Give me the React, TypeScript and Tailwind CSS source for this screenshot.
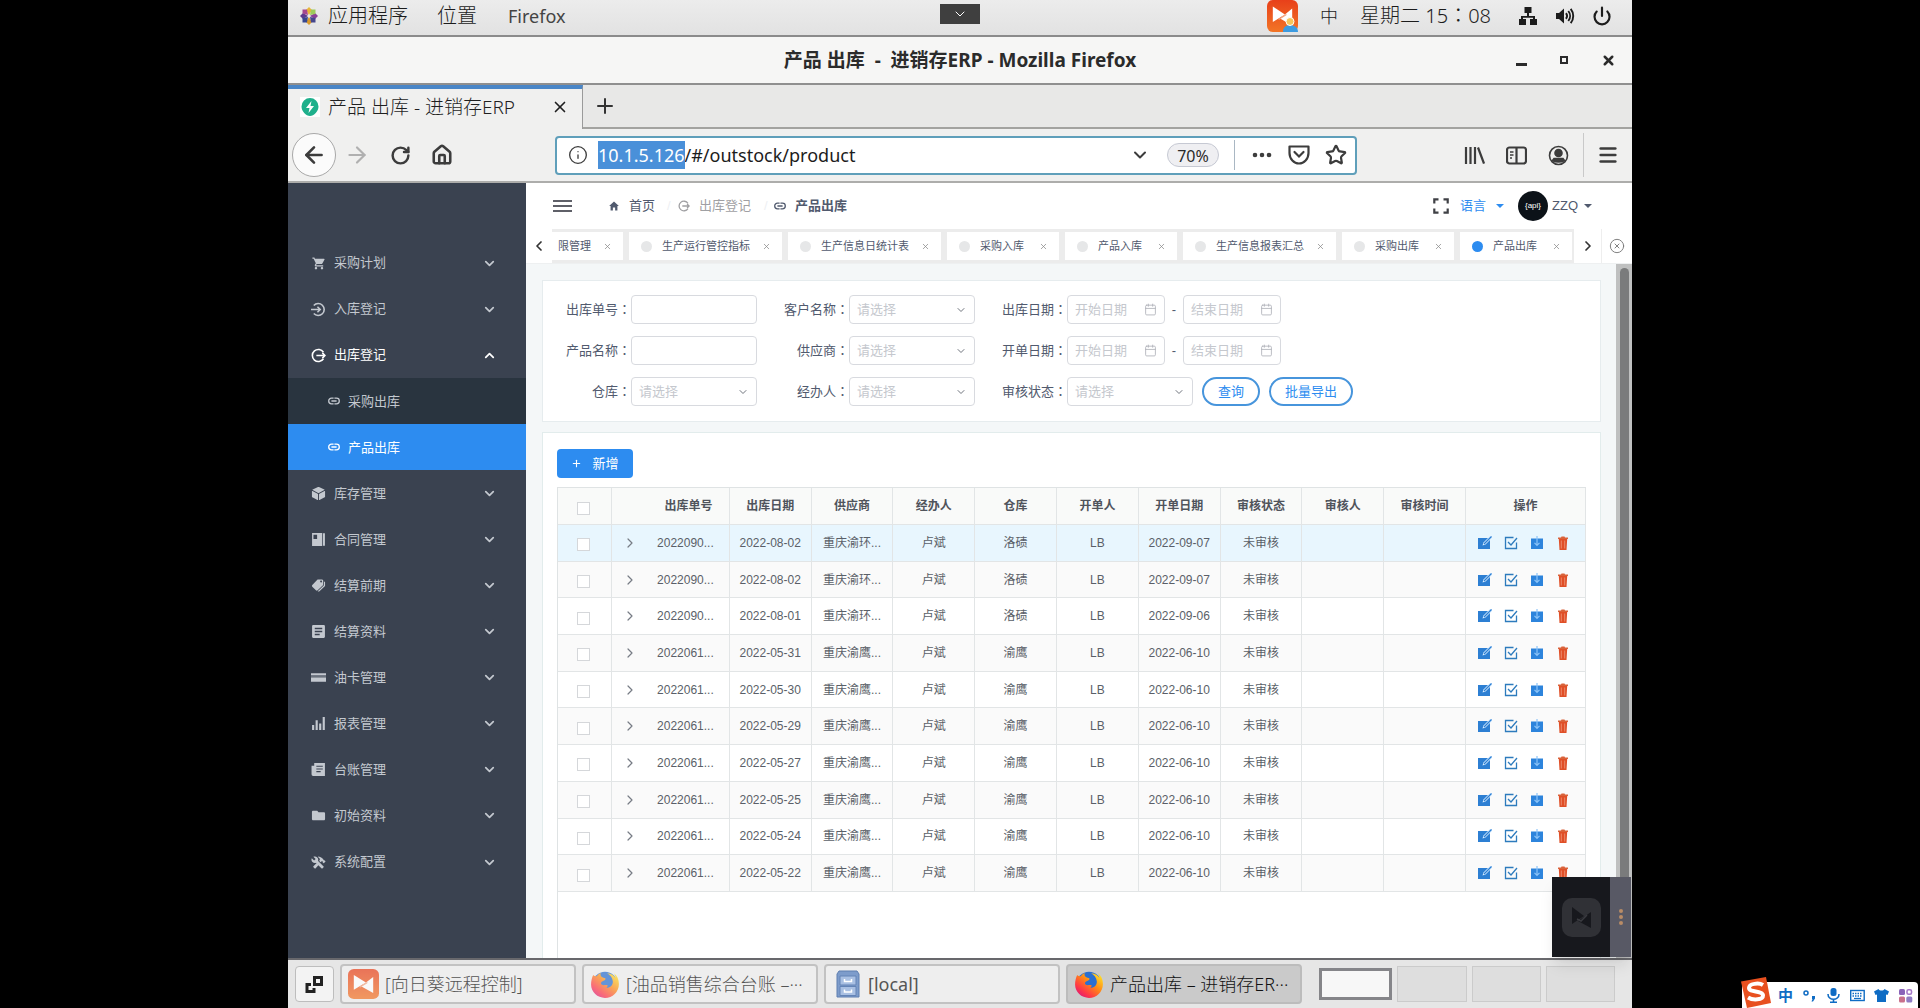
import {
  ArrowLeft,
  ArrowRight,
  Calendar,
  ChevronDown,
  ChevronLeft,
  ChevronRight,
  ChevronUp,
  CircleX,
  Ellipsis,
  House,
  Info,
  Menu,
  Plus,
  Power,
  RotateCw,
  Star,
  X,
} from "lucide-react";
import { useEffect, useRef, useState } from "react";
import type { ReactNode } from "react";
import { IoMdCart, IoMdConstruct, IoMdCube, IoMdFolder, IoMdHome, IoMdPricetags } from "react-icons/io";

type IconProps = { className?: string };

type OutstockRow = {
  orderNo: string;
  outDate: string;
  supplier: string;
  warehouse: string;
  billDate: string;
};

const rows: OutstockRow[] = [
  { orderNo: "2022090...", outDate: "2022-08-02", supplier: "重庆渝环...", warehouse: "洛碛", billDate: "2022-09-07" },
  { orderNo: "2022090...", outDate: "2022-08-02", supplier: "重庆渝环...", warehouse: "洛碛", billDate: "2022-09-07" },
  { orderNo: "2022090...", outDate: "2022-08-01", supplier: "重庆渝环...", warehouse: "洛碛", billDate: "2022-09-06" },
  { orderNo: "2022061...", outDate: "2022-05-31", supplier: "重庆渝鹰...", warehouse: "渝鹰", billDate: "2022-06-10" },
  { orderNo: "2022061...", outDate: "2022-05-30", supplier: "重庆渝鹰...", warehouse: "渝鹰", billDate: "2022-06-10" },
  { orderNo: "2022061...", outDate: "2022-05-29", supplier: "重庆渝鹰...", warehouse: "渝鹰", billDate: "2022-06-10" },
  { orderNo: "2022061...", outDate: "2022-05-27", supplier: "重庆渝鹰...", warehouse: "渝鹰", billDate: "2022-06-10" },
  { orderNo: "2022061...", outDate: "2022-05-25", supplier: "重庆渝鹰...", warehouse: "渝鹰", billDate: "2022-06-10" },
  { orderNo: "2022061...", outDate: "2022-05-24", supplier: "重庆渝鹰...", warehouse: "渝鹰", billDate: "2022-06-10" },
  { orderNo: "2022061...", outDate: "2022-05-22", supplier: "重庆渝鹰...", warehouse: "渝鹰", billDate: "2022-06-10" },
];

const pageTabs = [
  "限管理",
  "生产运行管控指标",
  "生产信息日统计表",
  "采购入库",
  "产品入库",
  "生产信息报表汇总",
  "采购出库",
  "产品出库",
];

function EnterIcon({ className }: IconProps) {
  return (
    <svg aria-hidden="true" className={className} fill="none" stroke="currentColor" strokeWidth="1.5" viewBox="0 0 14 14">
      <path d="M2.6 3.2a5.6 5.6 0 1 1 0 7.6" />
      <path d="M0 7h8.4M6 4.4 8.6 7 6 9.6" />
    </svg>
  );
}

function ExitIcon({ className }: IconProps) {
  return (
    <svg aria-hidden="true" className={className} fill="none" stroke="currentColor" strokeWidth="1.5" viewBox="0 0 14 14">
      <path d="M11.6 4A5.6 5.6 0 1 0 11.6 10" />
      <path d="M5 7h8M10.6 4.6 13 7l-2.4 2.4" />
    </svg>
  );
}

function LinkIcon({ className }: IconProps) {
  return (
    <svg aria-hidden="true" className={className} fill="none" stroke="currentColor" strokeWidth="1.3" viewBox="0 0 12 12">
      <path d="M5.6 3.2H3.500a2.800 2.800 0 0 0 0 5.600h2.100M6.400 3.200h2.100a2.800 2.800 0 0 1 0 5.600H6.400M3.400 6h5.200" />
    </svg>
  );
}

function ContractIcon({ className }: IconProps) {
  return (
    <svg aria-hidden="true" className={className} fill="currentColor" viewBox="0 0 14 14">
      <path d="M1 1h9.500v12H1zM2.300 2.500v4h3.400v-4z" fillRule="evenodd" />
      <path d="M11.200 1.200H13v11.600h-1.800z" />
    </svg>
  );
}

function DocIcon({ className }: IconProps) {
  return (
    <svg aria-hidden="true" className={className} fill="currentColor" viewBox="0 0 14 14">
      <path d="M2 1h10a1 1 0 0 1 1 1v10a1 1 0 0 1-1 1H2a1 1 0 0 1-1-1V2a1 1 0 0 1 1-1zm1.500 2.500v1.300h7V3.500zm0 2.800v1.300h7V6.300zm0 2.800v1.300h4.600V9.100z" fillRule="evenodd" />
    </svg>
  );
}

function CardIcon({ className }: IconProps) {
  return (
    <svg aria-hidden="true" className={className} fill="currentColor" viewBox="0 0 14 14">
      <path d="M0 3h14v2H0zM0 7h14v4H0z" />
      <path d="M0 5h14v2H0z" opacity="0.35" />
    </svg>
  );
}

function LedgerIcon({ className }: IconProps) {
  return (
    <svg aria-hidden="true" className={className} fill="currentColor" viewBox="0 0 14 14">
      <path d="M3 1h10v12H2a1.500 1.500 0 0 1-1.500-1.500V3.500H3zm2 2.500v1h6v-1zm0 2.500v1h6V6zm0 2.500v1h4v-1z" fillRule="evenodd" />
    </svg>
  );
}

function BarsIcon({ className }: IconProps) {
  return (
    <svg aria-hidden="true" className={className} fill="currentColor" viewBox="0 0 14 14">
      <path d="M1 8.500h2V13H1zM4.300 4h2v9h-2zM7.600 7h2v6h-2zM10.900 1h2v12h-2z" />
    </svg>
  );
}

function NetworkIcon({ className }: IconProps) {
  return (
    <svg aria-hidden="true" className={className} fill="currentColor" viewBox="0 0 20 20">
      <path d="M6.500 1h7v6h-2.500v3h6v3H19v6h-7v-6h3v-1.300H5V13h3v6H1v-6h2v-3h6V7H6.500z" />
    </svg>
  );
}

function VolumeIcon({ className }: IconProps) {
  return (
    <svg aria-hidden="true" className={className} fill="none" stroke="currentColor" strokeWidth="1.900" viewBox="0 0 20 20">
      <path d="M1 7h3l5-4.500v15L4 13H1z" fill="currentColor" stroke="none" />
      <path d="M11 7.200a4.500 4.500 0 0 1 0 5.600M13.300 5a8 8 0 0 1 0 10M15.700 2.800a11.500 11.500 0 0 1 0 14.400" />
    </svg>
  );
}

function GnomeIcon({ className }: IconProps) {
  return (
    <svg aria-hidden="true" className={className} viewBox="0 0 18 18">
      <path d="M9 0l3 3-3 5-3-5z" fill="#e8b53a" />
      <path d="M18 9l-3 3-5-3 5-3z" fill="#8a3f97" />
      <path d="M9 18l-3-3 3-5 3 5z" fill="#d99a2b" />
      <path d="M0 9l3-3 5 3-5 3z" fill="#5b3a8e" />
      <path d="M2.500 2.500H7L8 8 2.500 6.500z" fill="#a5478f" />
      <path d="M11 2.500h4.500V7L10 8z" fill="#9ccb5a" />
      <path d="M2.500 15.500V11L8 10l-1 5.500z" fill="#37478f" />
      <path d="M15.500 15.500H11L10 10l5.500 1z" fill="#45468c" />
    </svg>
  );
}

function SunloginIcon({ className }: IconProps) {
  return (
    <svg aria-hidden="true" className={className} preserveAspectRatio="none" viewBox="0 0 32 32">
      <defs>
        <linearGradient id="sunlogin" x1="0" x2="0" y1="0" y2="1">
          <stop offset="0" stopColor="#e8401a" />
          <stop offset="1" stopColor="#f27526" />
        </linearGradient>
      </defs>
      <rect fill="url(#sunlogin)" height="32" rx="6" width="32" />
      <path d="M6 6.500l12.500 8L6 22z" fill="#fff" />
      <path d="M26 8.500v17L13.500 18.500z" fill="#fff" />
      <path d="M12 19.500l8-5" stroke="#f2a27c" strokeWidth="1.200" />
    </svg>
  );
}

function FirefoxIcon({ className }: IconProps) {
  return (
    <svg aria-hidden="true" className={className} viewBox="0 0 28 28">
      <defs>
        <linearGradient id="fox" x1="0.900" x2="0.100" y1="0.050" y2="0.950">
          <stop offset="0" stopColor="#ffe226" />
          <stop offset="0.400" stopColor="#ff8a16" />
          <stop offset="0.750" stopColor="#ff3647" />
          <stop offset="1" stopColor="#d6157f" />
        </linearGradient>
      </defs>
      <circle cx="14" cy="14" fill="#2a6fd0" r="11.500" />
      <path d="M3 5.500c1 1 2 1.300 3.300 1.300C7.500 5 9 4.200 10 3.800 9.500 5.500 10 7 11.500 7.800c1.500.7 3 .6 3 1.500s-2 1.700-3.500 2.500c-1.300.8-.8 2.800.8 3.200 1.500.4 2.700-.4 4 0s.8 1.500-.5 2.200c3 1 6.300-1.700 6-5.700-.3-3.500-2.500-6-5.300-7.500 4 0 6.500 2 7.800 4.500 0-1.500-.6-3.300-1.500-4.500 3 2 4.700 6 4.700 10 0 7.500-6 13-13 13S1 21.500 1 14.500c0-3.500.8-6.500 2-9z" fill="url(#fox)" />
    </svg>
  );
}

function CabinetIcon({ className }: IconProps) {
  return (
    <svg aria-hidden="true" className={className} viewBox="0 0 24 28">
      <path d="M3 1h18l2 3v23H1V4z" fill="#7d9ccb" stroke="#5f7fb0" />
      <path d="M4 6h16v9H4zM4 16.500h16v9H4z" fill="#a9c0e3" stroke="#6484b6" />
      <path d="M8.500 9v2.500h7V9M8.500 19.500V22h7v-2.500" fill="none" stroke="#fff" strokeWidth="1.500" />
    </svg>
  );
}

function EditIcon() {
  return (
    <svg aria-hidden="true" className="size-[14px]" viewBox="0 0 14 14">
      <path d="M0 2h12v11H0z" fill="#2d7fd3" />
      <path d="M4.500 9.500l1-3L12 0h2v2L7.500 8.500z" fill="#d6ebff" />
      <path d="M6 8l7.500-7.500" stroke="#2d7fd3" strokeWidth="1.200" />
    </svg>
  );
}

function AuditIcon() {
  return (
    <svg aria-hidden="true" className="size-[14px]" fill="none" stroke="#2d7bbd" strokeWidth="1.300" viewBox="0 0 14 14">
      <path d="M9.500 1.500H1.500v11h11V6.500" />
      <path d="M4 6l3 3 6-7" />
    </svg>
  );
}

function DownloadIcon() {
  return (
    <svg aria-hidden="true" className="size-[14px]" viewBox="0 0 14 14">
      <path d="M1 2.500h12V13H1z" fill="#2d84dc" />
      <path d="M7 0v9M4.500 6.800L7 9.300l2.500-2.500" fill="none" stroke="#8cc4f8" strokeWidth="1.200" />
    </svg>
  );
}

function TrashIcon() {
  return (
    <svg aria-hidden="true" className="size-[14px]" viewBox="0 0 14 14">
      <path d="M2 1.500h3l.5-1h3l.5 1h3V3H2z" fill="#d9623a" />
      <path d="M2.800 3h8.400L10.500 14h-7z" fill="#e04f27" />
      <path d="M5.300 4.500v8M8.700 4.500v8" stroke="#f2b29b" strokeWidth="0.600" />
    </svg>
  );
}

const upperMenu = [
  { label: "采购计划", Icon: IoMdCart },
  { label: "入库登记", Icon: EnterIcon },
];

const lowerMenu = [
  { label: "库存管理", Icon: IoMdCube },
  { label: "合同管理", Icon: ContractIcon },
  { label: "结算前期", Icon: IoMdPricetags },
  { label: "结算资料", Icon: DocIcon },
  { label: "油卡管理", Icon: CardIcon },
  { label: "报表管理", Icon: BarsIcon },
  { label: "台账管理", Icon: LedgerIcon },
  { label: "初始资料", Icon: IoMdFolder },
  { label: "系统配置", Icon: IoMdConstruct },
];

function DesktopPanel() {
  return (
    <header className="relative flex h-[37px] items-center border-b-2 border-[#8b8b8b] bg-linear-to-b from-[#ececec] to-[#e2e2e2] pr-5 pb-1 pl-3 text-xl text-[#1c1c1c]">
      <GnomeIcon className="size-[18px]" />
      <nav className="ml-[10px] flex items-center gap-[29px] font-light">
        <button type="button">应用程序</button>
        <button type="button">位置</button>
        <button className="ml-[2px] text-lg font-normal text-[#444]" type="button">
          Firefox
        </button>
      </nav>
      <button
        aria-label="展开"
        className="absolute top-1 left-1/2 grid h-5 w-10 -translate-x-1/2 place-items-center bg-[#3f3f3f] text-white"
        type="button"
      >
        <ChevronDown className="size-4" strokeWidth={1.5} />
      </button>
      <div className="ml-auto flex items-center">
        <span className="relative">
          <SunloginIcon className="h-8 w-[31px]" />
          <svg aria-hidden="true" className="absolute right-0 bottom-0 size-4" viewBox="0 0 16 16">
            <path d="M1 16c0-5 3-7 7-7s8 2 8 7z" fill="#3c9be0" />
            <circle cx="8" cy="5.500" fill="#f6c65b" r="4" stroke="#fff" />
          </svg>
        </span>
        <span className="ml-[22px] text-lg font-light">中</span>
        <time className="ml-[22px] font-light">
          星期二 15<span className="font-['Noto_Sans_CJK_TC',sans-serif]">：</span>08
        </time>
        <NetworkIcon className="ml-[27px] size-5" />
        <VolumeIcon className="ml-[17px] size-5" />
        <Power className="ml-[17px] size-5" strokeWidth={2.6} />
      </div>
    </header>
  );
}

function TitleBar() {
  return (
    <div className="grid h-[48px] grid-cols-[1fr_auto_1fr] items-center border-b-2 border-[#8f8f8f] bg-[#f6f6f5] text-[#2b2b2b]">
      <h1 className="col-start-2 text-[19px] leading-7 font-bold whitespace-pre">
        产品 出库  -  进销存ERP - Mozilla Firefox
      </h1>
      <div className="flex items-center justify-end gap-[33px] pr-4">
        <button aria-label="最小化" className="mt-2 h-[3px] w-[11px] bg-[#2b2b2b]" type="button" />
        <button aria-label="最大化" className="size-2 border-2 border-[#2b2b2b]" type="button" />
        <button aria-label="关闭" type="button">
          <X className="size-[15px]" strokeWidth={4} />
        </button>
      </div>
    </div>
  );
}

function BrowserTabs() {
  return (
    <div className="flex h-[44px] bg-[#e8e8e7]">
      <div className="flex w-[295px] items-center border-t-4 border-r border-t-[#4a86c7] border-r-[#9a9a9a] bg-[#f0f0ef] pr-[13px] pb-1 pl-3 text-[19px] leading-7 text-[#1f1f1f]">
        <span className="grid size-[20px] place-items-center bg-white">
          <svg aria-hidden="true" className="size-[18px]" viewBox="0 0 18 18">
            <path d="M9 0a8.500 8.500 0 0 1 8.500 8.500C17.500 13 13 18 9 18S.5 13 .5 8.500A8.500 8.500 0 0 1 9 0z" fill="#1fb08c" />
            <path d="M10.500 3L5 10h3.500L7.500 15 13 8H9.500z" fill="#fff" />
          </svg>
        </span>
        <span className="ml-2 font-light whitespace-pre">产品 出库 - 进销存ERP</span>
        <button aria-label="关闭标签页" className="ml-auto" type="button">
          <X className="size-[18px]" strokeWidth={2.2} />
        </button>
      </div>
      <button aria-label="新建标签页" className="flex flex-1 items-center border-b-2 border-[#a3a3a0] pl-[10px]" type="button">
        <Plus className="size-6 text-[#333]" strokeWidth={2} />
      </button>
    </div>
  );
}

function NavigationBar() {
  const urlRef = useRef<HTMLInputElement>(null);

  useEffect(() => {
    urlRef.current?.focus();
    urlRef.current?.setSelectionRange(0, 10);
  }, []);

  return (
    <div className="flex h-[54px] items-center border-b-2 border-[#adadab] bg-[#f0f0ef] pr-[13px] pl-1 text-[#3c3c3c]">
      <button
        aria-label="后退"
        className="grid size-11 place-items-center rounded-full border border-[#a8a8a8] bg-[#fbfbfb]"
        type="button"
      >
        <ArrowLeft className="size-[26px]" strokeWidth={2.4} />
      </button>
      <button aria-label="前进" className="ml-2 text-[#b0b0b0]" type="button">
        <ArrowRight className="size-[26px]" strokeWidth={2} />
      </button>
      <button aria-label="刷新" className="ml-5" type="button">
        <RotateCw className="size-[21px]" strokeWidth={2.8} />
      </button>
      <button aria-label="主页" className="ml-5" type="button">
        <House className="size-[22px]" strokeWidth={2.8} />
      </button>
      <div className="ml-[102px] flex h-[39px] w-[802px] items-center rounded border-2 border-[#5f9fba] bg-white pr-2 pl-[11px]">
        <Info className="size-5" strokeWidth={1.6} />
        <input
          aria-label="地址"
          className="ml-[10px] min-w-0 flex-1 text-lg text-[#1c1c1c] outline-none selection:bg-[#4a90d9] selection:text-white"
          defaultValue="10.1.5.126/#/outstock/product"
          ref={urlRef}
          type="text"
        />
        <ChevronDown className="size-5" strokeWidth={2.4} />
        <span className="ml-[17px] grid h-6 w-[52px] place-items-center rounded-full border border-[#c6c9d3] bg-[#efeff2] text-base text-[#2b2b2b]">
          70%
        </span>
        <span className="mx-[15px] h-[30px] w-px bg-[#a9b7c3]" />
        <Ellipsis className="size-6" fill="currentColor" strokeWidth={2.6} />
        <svg aria-hidden="true" className="ml-[14px] size-[22px]" fill="none" stroke="currentColor" strokeWidth="2.200" viewBox="0 0 22 22">
          <path d="M1.500 2.500h19V9c0 6-4.500 10.500-9.500 10.500S1.500 15 1.500 9z" strokeLinejoin="round" />
          <path d="M6.500 8l4.500 4.500L15.500 8" strokeLinecap="round" />
        </svg>
        <Star className="ml-[15px] size-[22px]" strokeWidth={2.4} />
      </div>
      <div className="ml-auto flex items-center">
        <svg aria-label="书库" className="size-[21px]" fill="none" stroke="currentColor" strokeWidth="2.200" viewBox="0 0 21 21">
          <path d="M2 2v17M6.500 2v17M11 2v17M14 2.500l6 16" />
        </svg>
        <svg aria-label="侧栏" className="ml-[21px] size-[21px]" fill="none" stroke="currentColor" strokeWidth="2.200" viewBox="0 0 21 21">
          <rect height="16" rx="2.500" width="19" x="1" y="2.500" />
          <path d="M10.500 3v15" />
          <path d="M4 7h3.500M4 10h3.500M4 13h2" strokeWidth="1.300" />
        </svg>
        <svg aria-label="账户" className="ml-[21px] size-[21px]" fill="none" stroke="currentColor" strokeWidth="1.600" viewBox="0 0 21 21">
          <circle cx="10.500" cy="10.500" r="9" />
          <circle cx="10.500" cy="8" fill="currentColor" r="3.500" />
          <path d="M4.500 15.500c3 2 9 2 12 0l-1.500-2h-9z" fill="currentColor" />
        </svg>
        <span className="ml-[14px] h-11 w-px bg-[#c9c9c9]" />
        <Menu className="ml-[13px] size-[22px]" strokeWidth={2.8} />
      </div>
    </div>
  );
}

function MenuGroup({ label, Icon, open }: { label: string; Icon: (props: IconProps) => ReactNode; open?: boolean }) {
  return (
    <button
      aria-expanded={open ?? false}
      className={
        open
          ? "flex flex-1 items-center pr-[29px] pl-[23px] text-white"
          : "flex flex-1 items-center pr-[29px] pl-[23px] text-[#c3c8cf]"
      }
      type="button"
    >
      <Icon className="size-[15px]" />
      <span className="ml-2">{label}</span>
      {open ? (
        <ChevronUp className="ml-auto size-[15px]" strokeWidth={2.8} />
      ) : (
        <ChevronDown className="ml-auto size-[15px]" strokeWidth={2.8} />
      )}
    </button>
  );
}

function Sidebar() {
  return (
    <nav className="flex w-[238px] shrink-0 flex-col bg-[#3a4250] pt-[57px] pb-[73px] text-[13px]">
      {upperMenu.map((item) => (
        <MenuGroup Icon={item.Icon} key={item.label} label={item.label} />
      ))}
      <MenuGroup Icon={ExitIcon} label="出库登记" open />
      <a className="flex flex-1 items-center bg-[#29343f] pl-10 text-[#c3c8cf]" href="#/outstock/purchase">
        <LinkIcon className="size-3" />
        <span className="ml-2">采购出库</span>
      </a>
      <a className="flex flex-1 items-center bg-[#2d8cf0] pl-10 text-white" href="#/outstock/product">
        <LinkIcon className="size-3" />
        <span className="ml-2">产品出库</span>
      </a>
      {lowerMenu.map((item) => (
        <MenuGroup Icon={item.Icon} key={item.label} label={item.label} />
      ))}
    </nav>
  );
}

function PageHeader() {
  return (
    <div className="flex h-[46px] items-center bg-white pr-10 pl-[27px] text-[13px] text-[#515a6e]">
      <button aria-label="折叠菜单" className="flex w-[19px] flex-col gap-[3px]" type="button">
        <span className="h-[2px] bg-[#5f6068]" />
        <span className="h-[2px] bg-[#5f6068]" />
        <span className="h-[2px] bg-[#5f6068]" />
      </button>
      <a className="ml-9 flex items-center gap-[9px]" href="#/home">
        <IoMdHome className="size-3" />
        首页
      </a>
      <span className="ml-3 w-2 text-[#eef0f3]">/</span>
      <a className="flex items-center gap-[9px] text-[#a0a0a3]" href="#/outstock">
        <ExitIcon className="ml-[3px] size-3" />
        出库登记
      </a>
      <span className="ml-[13px] w-2 text-[#eef0f3]">/</span>
      <span className="flex items-center gap-[9px] font-bold">
        <LinkIcon className="ml-[2px] size-3" />
        产品出库
      </span>
      <button aria-label="全屏" className="ml-auto" type="button">
        <svg aria-hidden="true" className="size-4" fill="none" stroke="#3f4045" strokeWidth="2.200" viewBox="0 0 16 16">
          <path d="M1.300 5.500V1.300h4.200M10.500 1.300h4.200v4.200M14.700 10.500v4.200h-4.200M5.500 14.700H1.300v-4.200" />
        </svg>
      </button>
      <button className="ml-[11px] flex items-center gap-[10px] text-[#2d8cf0]" type="button">
        语言
        <span className="border-x-4 border-t-4 border-x-transparent border-t-[#2d8cf0]" />
      </button>
      <button className="ml-[14px] flex items-center" type="button">
        <span className="grid size-[30px] place-items-center rounded-full bg-[#0c1218] text-[8px] text-white">{"{api}"}</span>
        <span className="ml-1">ZZQ</span>
        <span className="ml-[6px] border-x-4 border-t-4 border-x-transparent border-t-[#515a6e]" />
      </button>
    </div>
  );
}

function PageTabs() {
  return (
    <div className="flex h-[35px] border-b border-[#eef0f1] bg-white">
      <button aria-label="向左" className="grid w-[26px] place-items-center" type="button">
        <ChevronLeft className="size-4 text-[#333]" strokeWidth={2.6} />
      </button>
      <div className="flex min-w-0 flex-1 justify-end gap-[6px] overflow-hidden bg-[#ececec] py-[3px] pr-[2px]">
        {pageTabs.map((tab) => (
          <div
            className="flex min-w-[112px] shrink-0 items-center bg-white pr-[11px] pl-3 text-[11px] text-[#515a6e] first:min-w-0"
            key={tab}
          >
            <span
              className={
                tab === "产品出库" ? "size-[11px] rounded-full bg-[#2d8cf0]" : "size-[11px] rounded-full bg-[#e6e7e8]"
              }
            />
            <a className="ml-[10px]" href="#/outstock/product">
              {tab}
            </a>
            <button aria-label={`关闭${tab}`} className="ml-auto pl-3" type="button">
              <X className="size-[9px] text-[#8a8a8a]" strokeWidth={2} />
            </button>
          </div>
        ))}
      </div>
      <button aria-label="向右" className="grid w-7 place-items-center border-r border-[#eee]" type="button">
        <ChevronRight className="size-4 text-[#333]" strokeWidth={2.6} />
      </button>
      <button aria-label="关闭全部" className="grid w-[30px] place-items-center" type="button">
        <CircleX className="size-4 text-[#777]" strokeWidth={1.4} />
      </button>
    </div>
  );
}

function FormItem({ id, label, children }: { id: string; label: string; children: ReactNode }) {
  return (
    <div className="flex items-center">
      <label className="w-[66px] shrink-0 text-right whitespace-nowrap" htmlFor={id}>
        {label}
        <span className="font-['Noto_Sans_CJK_TC',sans-serif]">：</span>
      </label>
      {children}
    </div>
  );
}

function TextField({ id }: { id: string }) {
  return <input className="h-[29px] w-[126px] rounded border border-[#d8dadf] bg-white px-2" id={id} type="text" />;
}

function SelectField({ id }: { id: string }) {
  return (
    <span className="relative">
      <select
        className="block h-[29px] w-[126px] appearance-none rounded border border-[#d8dadf] bg-white px-[7px] text-[#c5c8ce]"
        id={id}
      >
        <option>请选择</option>
      </select>
      <ChevronDown className="pointer-events-none absolute top-[9px] right-2 size-3 text-[#6f747d]" strokeWidth={2} />
    </span>
  );
}

function DateField({ id, placeholder }: { id: string; placeholder: string }) {
  return (
    <span className="relative">
      <input
        aria-label={placeholder}
        className="block h-[29px] w-[98px] rounded border border-[#d8dadf] bg-white pr-6 pl-[7px] placeholder:text-[#c5c8ce]"
        id={id}
        placeholder={placeholder}
        type="text"
      />
      <Calendar className="pointer-events-none absolute top-2 right-2 size-[13px] text-[#b0b3ba]" strokeWidth={1.6} />
    </span>
  );
}

function SearchForm() {
  return (
    <form className="grid grid-cols-[auto_auto_1fr] gap-x-[26px] gap-y-3 border border-[#e6ecee] bg-white px-[22px] pt-[14px] pb-[15px] text-[13px] text-[#515a6e]">
      <FormItem id="order-no" label="出库单号">
        <TextField id="order-no" />
      </FormItem>
      <FormItem id="customer" label="客户名称">
        <SelectField id="customer" />
      </FormItem>
      <FormItem id="out-start" label="出库日期">
        <DateField id="out-start" placeholder="开始日期" />
        <span className="w-[18px] text-center">-</span>
        <DateField id="out-end" placeholder="结束日期" />
      </FormItem>
      <FormItem id="product" label="产品名称">
        <TextField id="product" />
      </FormItem>
      <FormItem id="supplier" label="供应商">
        <SelectField id="supplier" />
      </FormItem>
      <FormItem id="bill-start" label="开单日期">
        <DateField id="bill-start" placeholder="开始日期" />
        <span className="w-[18px] text-center">-</span>
        <DateField id="bill-end" placeholder="结束日期" />
      </FormItem>
      <FormItem id="warehouse" label="仓库">
        <SelectField id="warehouse" />
      </FormItem>
      <FormItem id="handler" label="经办人">
        <SelectField id="handler" />
      </FormItem>
      <FormItem id="status" label="审核状态">
        <SelectField id="status" />
        <button className="ml-[9px] h-[29px] rounded-full border-2 border-[#4795dc] px-[14px] text-[#2d8cf0]" type="button">
          查询
        </button>
        <button className="ml-[9px] h-[29px] rounded-full border-2 border-[#4795dc] px-[14px] text-[#2d8cf0]" type="button">
          批量导出
        </button>
      </FormItem>
    </form>
  );
}

const checkboxClass = "ml-[19px] mt-1 block size-[13px] appearance-none border border-[#d5d7da] bg-white checked:bg-[#2d8cf0]";
const headers = ["出库日期", "供应商", "经办人", "仓库", "开单人", "开单日期", "审核状态", "审核人", "审核时间"];

function OutstockTable() {
  const [activeRow, setActiveRow] = useState(0);

  return (
    <div className="flex-1 border-t border-l border-[#dfe3e4]">
      <table className="h-[404px] w-full table-fixed border-separate border-spacing-0 text-center text-xs text-[#5a5f68] [&_td]:border-r [&_td]:border-b [&_td]:border-[#e2e5e6] [&_td]:p-0 [&_th]:border-r [&_th]:border-b [&_th]:border-[#e2e5e6] [&_th]:p-0">
        <colgroup>
          <col className="w-[54px]" />
          <col className="w-[36px]" />
          <col />
          <col />
          <col />
          <col />
          <col />
          <col />
          <col />
          <col />
          <col />
          <col />
          <col className="w-[120px]" />
        </colgroup>
        <thead>
          <tr className="h-[37px] bg-[#f9faf9] text-[#50545c]">
            <th>
              <input aria-label="全选" className={checkboxClass} type="checkbox" />
            </th>
            <th className="border-r-0!" />
            <th>出库单号</th>
            {headers.map((header) => (
              <th key={header}>{header}</th>
            ))}
            <th>操作</th>
          </tr>
        </thead>
        <tbody>
          {rows.map((row, index) => (
            <tr
              className={index === activeRow ? "bg-[#e8f6fe]" : index % 2 === 1 ? "bg-[#fafafa]" : "bg-white"}
              key={row.outDate + index}
              onClick={() => setActiveRow(index)}
            >
              <td>
                <input aria-label={`选择 ${row.outDate}`} className={checkboxClass} type="checkbox" />
              </td>
              <td className="border-r-0!">
                <button aria-label="展开" className="mx-auto block" type="button">
                  <ChevronRight className="size-4 text-[#777c85]" strokeWidth={1.8} />
                </button>
              </td>
              <td className="pr-[6px]!">{row.orderNo}</td>
              <td>{row.outDate}</td>
              <td>{row.supplier}</td>
              <td>卢斌</td>
              <td>{row.warehouse}</td>
              <td>LB</td>
              <td>{row.billDate}</td>
              <td>未审核</td>
              <td />
              <td />
              <td>
                <div className="flex items-center justify-center gap-3 pr-1">
                  <button aria-label="编辑" type="button">
                    <EditIcon />
                  </button>
                  <button aria-label="审核" type="button">
                    <AuditIcon />
                  </button>
                  <button aria-label="导出" type="button">
                    <DownloadIcon />
                  </button>
                  <button aria-label="删除" type="button">
                    <TrashIcon />
                  </button>
                </div>
              </td>
            </tr>
          ))}
        </tbody>
      </table>
    </div>
  );
}

function RemoteWidget() {
  return (
    <div className="absolute right-px bottom-px flex h-20 w-[79px] bg-[#17181d] shadow-lg">
      <div className="grid flex-1 place-items-center">
        <svg aria-hidden="true" className="size-[39px]" viewBox="0 0 39 39">
          <rect fill="#303136" height="39" rx="10" width="39" />
          <path d="M10 9l12 9-12 8z" fill="#17181d" />
          <path d="M29 14v16l-13-7z" fill="#17181d" />
          <path d="M15 21l4 2 6-6" fill="none" stroke="#3a3b40" strokeWidth="1.500" />
        </svg>
      </div>
      <div className="flex w-[21px] flex-col items-center justify-center gap-[2px] bg-[#585965]">
        <span className="size-1 rounded-full bg-[#b98c66]" />
        <span className="size-1 rounded-full bg-[#b98c66]" />
        <span className="size-1 rounded-full bg-[#b98c66]" />
      </div>
    </div>
  );
}

function Taskbar() {
  const inactive =
    "flex h-10 w-[236px] items-center gap-[6px] rounded border-2 border-[#c2c2c2] bg-[#eeeeee] pl-[6px] text-lg font-light text-[#555]";

  return (
    <footer className="flex h-[50px] items-center gap-[6px] border-t-2 border-[#68686c] bg-[#e6e6e6] px-[7px]">
      <button aria-label="显示桌面" className="grid h-9 w-[39px] place-items-center rounded border border-[#bdbdbd] bg-[#f3f3f3]" type="button">
        <svg aria-hidden="true" className="size-[19px]" fill="none" stroke="#222" strokeWidth="3" viewBox="0 0 19 19">
          <path d="M9.500 2.500h7v7h-7z" />
          <path d="M6 9.500H2v7h7V13" />
        </svg>
      </button>
      <button className={inactive} type="button">
        <SunloginIcon className="h-[30px] w-[31px] opacity-70" />
        <span>[向日葵远程控制]</span>
      </button>
      <button className={inactive} type="button">
        <FirefoxIcon className="size-[30px] opacity-70" />
        <span className="whitespace-nowrap">[油品销售综合台账 –···</span>
      </button>
      <button className={inactive} type="button">
        <CabinetIcon className="ml-1 h-7 w-6" />
        <span className="ml-[2px] font-normal">[local]</span>
      </button>
      <button
        className="flex h-10 w-[236px] items-center gap-[6px] rounded border-2 border-[#bcbcbc] bg-[#cacaca] pl-[6px] text-lg font-light whitespace-pre text-[#111]"
        type="button"
      >
        <FirefoxIcon className="size-[30px]" />
        <span>产品出库 – 进销存ER···</span>
      </button>
      <div className="ml-[11px] flex flex-1 items-center gap-[5px] pr-[10px]">
        <button aria-label="工作区 1" className="h-8 flex-1 border-3 border-[#858589] bg-[#f7f7f7]" type="button" />
        <button aria-label="工作区 2" className="h-9 flex-1 border border-[#cbcbcb] bg-[#dedede]" type="button" />
        <button aria-label="工作区 3" className="h-9 flex-1 border border-[#cbcbcb] bg-[#dedede]" type="button" />
        <button aria-label="工作区 4" className="h-9 flex-1 border border-[#cbcbcb] bg-[#dedede]" type="button" />
      </div>
    </footer>
  );
}

function InputMethodBar() {
  return (
    <div className="absolute right-[2px] bottom-0 flex h-[26px] items-center gap-[9px] rounded-t-sm bg-white pr-[5px] pl-9 text-[#0f6cc4]">
      <svg aria-hidden="true" className="absolute bottom-0 left-[-2px] size-8" viewBox="0 0 32 32">
        <path d="M1 5.500L26 1l5 26-24 5z" fill="#e8501f" />
        <path d="M23 9c-4-2.500-14-1.500-14 3 0 4.500 14 2.500 14 7.500 0 4.500-10 5-15 2" fill="none" stroke="#fff" strokeWidth="4" />
      </svg>
      <span className="text-[15px] leading-none font-bold">中</span>
      <svg aria-hidden="true" className="size-[15px]" viewBox="0 0 15 15">
        <circle cx="4" cy="5" fill="none" r="2" stroke="currentColor" strokeWidth="1.500" />
        <path d="M10 8h3v2.500L11 13.500h-1.500l1-2.500H10z" fill="currentColor" />
      </svg>
      <svg aria-hidden="true" className="size-[15px]" fill="none" stroke="currentColor" strokeWidth="1.600" viewBox="0 0 15 15">
        <rect fill="currentColor" height="8" rx="2.500" stroke="none" width="6" x="4.500" y="0" />
        <path d="M2 6c0 7 11 7 11 0M7.500 11v3M4 14.200h7" />
      </svg>
      <svg aria-hidden="true" className="size-[15px]" viewBox="0 0 15 15">
        <rect fill="none" height="10" stroke="currentColor" strokeWidth="1.400" width="13.500" x="0.700" y="2.500" />
        <path d="M2.500 5.500h10M2.500 8h10" stroke="currentColor" strokeDasharray="1.500 1" strokeWidth="1.500" />
        <path d="M4 10.500h7" stroke="currentColor" strokeWidth="1.300" />
      </svg>
      <svg aria-hidden="true" className="size-[15px]" fill="currentColor" viewBox="0 0 15 15">
        <path d="M4.500 1c1 2 5 2 6 0L15 3.500 13.500 7 12 6.500V14H3V6.500L1.500 7 0 3.500z" />
      </svg>
      <svg aria-hidden="true" className="size-[15px]" viewBox="0 0 15 15">
        <rect fill="#8a63b8" height="6" rx="1.500" width="6" x="1" y="1" />
        <rect fill="none" height="4.500" rx="1.500" stroke="#a678c8" strokeWidth="1.600" width="4.500" x="9" y="1.800" />
        <rect fill="#c9708c" height="6" rx="1.500" width="6" x="1" y="8.500" />
        <rect fill="#8f7cc4" height="6" rx="1.500" width="6" x="8.300" y="8.500" />
      </svg>
    </div>
  );
}

export default function App() {
  return (
    <div className="relative flex min-h-screen flex-col bg-black px-[15%] font-['Noto_Sans','Noto_Sans_CJK_SC',sans-serif]">
      <DesktopPanel />
      <TitleBar />
      <BrowserTabs />
      <NavigationBar />
      <main className="relative flex flex-1 font-['Liberation_Sans','Noto_Sans_CJK_SC',sans-serif]">
        <Sidebar />
        <div className="flex min-w-0 flex-1 flex-col bg-[#f4f7f8]">
          <PageHeader />
          <PageTabs />
          <div className="flex flex-1">
            <div className="flex min-w-0 flex-1 flex-col gap-[10px] pt-4 pr-[15px] pl-4">
              <SearchForm />
              <section className="flex flex-1 flex-col border border-b-0 border-[#e2ecec] bg-white px-[14px] pt-4">
                <button
                  className="mb-[9px] flex h-[29px] w-[76px] items-center justify-center gap-[10px] rounded-sm bg-[#2d8cf0] text-[13px] text-white"
                  type="button"
                >
                  <Plus className="size-[11px]" strokeWidth={2.4} />
                  新增
                </button>
                <OutstockTable />
              </section>
            </div>
            <div className="flex w-4 justify-center bg-[#bfc0c0] py-1">
              <div className="w-[9px] rounded-full bg-[#7a7b7c]" />
            </div>
          </div>
        </div>
        <RemoteWidget />
      </main>
      <Taskbar />
      <InputMethodBar />
    </div>
  );
}
